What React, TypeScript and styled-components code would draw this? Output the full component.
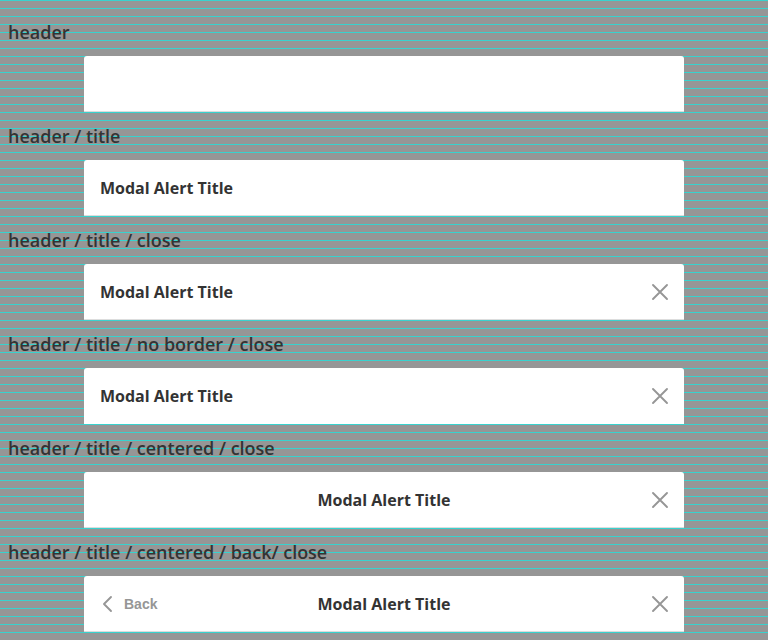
import React from "react";
import styled, { createGlobalStyle } from "styled-components";

const Global = createGlobalStyle`
  *, *::before, *::after { box-sizing: border-box; }
  body {
    margin: 0;
    overflow: hidden;
    background: #969696;
    font-family: "Open Sans", sans-serif;
    color: #333;
  }
`;

const Page = styled.main`
  height: 640px;
  padding: 16px 8px 0;
  overflow: hidden;
  background-color: #969696;
  background-image: linear-gradient(to bottom, #38d2ce 1px, #969696 1px);
  background-size: 100% 8px;
`;

const Label = styled.h2`
  margin: 0 0 8px;
  height: 32px;
  line-height: 32px;
  font-size: 18px;
  font-weight: 600;
  letter-spacing: -0.01px;
`;

const Header = styled.header<{ $border?: boolean }>`
  display: grid;
  grid-template-columns: 1fr auto 1fr;
  align-items: center;
  width: 600px;
  height: 56px;
  margin: 0 auto 8px;
  padding: 0 16px;
  background: #fff;
  box-shadow: ${(p) => (p.$border ? "inset 0 -1px 0 #ddd" : "none")};
  border-radius: 3px 3px 0 0;
`;

const Title = styled.h3<{ $centered?: boolean }>`
  margin: 0;
  grid-row: 1;
  grid-column: ${(p) => (p.$centered ? 2 : 1)};
  font-size: 16px;
  line-height: 24px;
  font-weight: 700;
`;

const IconButton = styled.button`
  grid-row: 1;
  display: flex;
  align-items: center;
  padding: 0;
  border: 0;
  background: none;
  color: #969696;
`;

const CloseButton = styled(IconButton)`
  grid-column: 3;
  justify-self: end;
  margin-right: -4px;
`;

const BackButton = styled(IconButton)`
  grid-column: 1;
  justify-self: start;
  gap: 4px;
  margin-left: -4px;
  font: 700 14px "Liberation Sans", sans-serif;
`;

const Icon = ({ d }: { d: string }) => (
  <svg width="24" height="24" viewBox="0 0 24 24" fill="none" stroke="currentColor" strokeWidth="1.9" strokeLinecap="round" strokeLinejoin="round">
    <path d={d} />
  </svg>
);

const rows = [
  { label: "header", border: true },
  { label: "header / title", title: true, border: true },
  { label: "header / title / close", title: true, close: true, border: true },
  { label: "header / title / no border / close", title: true, close: true },
  { label: "header / title / centered / close", title: true, centered: true, close: true, border: true },
  { label: "header / title / centered / back/ close", title: true, centered: true, back: true, close: true, border: true },
];

export default function App() {
  return (
    <>
      <Global />
      <Page>
        {rows.map((r) => (
          <section key={r.label}>
            <Label>{r.label}</Label>
            <Header $border={r.border}>
              {r.back && <BackButton><Icon d="M15 5L8 12L15 19" />Back</BackButton>}
              {r.title && <Title $centered={r.centered}>Modal Alert Title</Title>}
              {r.close && <CloseButton aria-label="Close"><Icon d="M5 5L19 19M19 5L5 19" /></CloseButton>}
            </Header>
          </section>
        ))}
      </Page>
    </>
  );
}
